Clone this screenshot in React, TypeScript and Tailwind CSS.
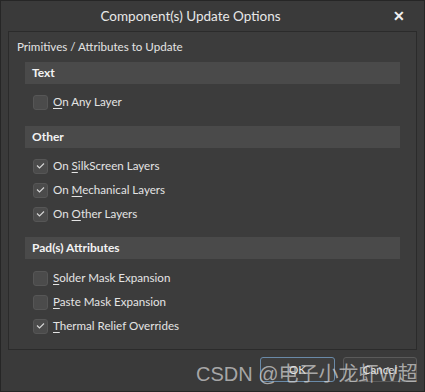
import React from "react";

const Check = ({ checked }: { checked: boolean }) => (
  <div className="w-[15px] h-[15px] rounded-[3px] bg-[#4b4b4b] border border-[#565656] flex items-center justify-center shrink-0">
    {checked && (
      <svg width="11" height="11" viewBox="0 0 11 11">
        <polyline points="2,4.5 4.5,7 9,2.5" fill="none" stroke="#d6d6d6" strokeWidth="1.1" />
      </svg>
    )}
  </div>
);

const Row = ({ checked, pre, u, rest }: { checked: boolean; pre: string; u: string; rest: string }) => (
  <div className="h-[24px] flex items-center pl-[8px] gap-[5px]">
    <Check checked={checked} />
    <span className="text-[11.6px] text-[#e4e4e4]">
      {pre}
      <span className="underline underline-offset-2">{u}</span>
      {rest}
    </span>
  </div>
);

const Header = ({ title }: { title: string }) => (
  <div className="h-[22px] bg-[#4a4a4a] flex items-center pl-[7px] text-[12px] font-bold text-[#f2f2f2]">{title}</div>
);

export default function App() {
  return (
    <div
      className="w-[425px] h-[392px] bg-[#3a3a3a] border border-[#262626] flex flex-col relative overflow-hidden"
      style={{ fontFamily: 'Lato, "Noto Sans", sans-serif' }}
    >
      <div className="h-[30px] relative flex items-center justify-center shrink-0">
        <span className="text-[13.5px] text-[#e8e8e8] -ml-[44px]">Component(s) Update Options</span>
        <span className="absolute right-[19px] top-[4px] text-[14px] font-bold text-[#f0f0f0]">✕</span>
      </div>
      <div className="mx-[7px] h-[319px] border border-[#2b2b2b] bg-[#3c3c3c] flex flex-col pl-[8px] pr-[16px]">
        <div className="h-[30px] flex items-center text-[11.6px] text-[#e4e4e4]">Primitives / Attributes to Update</div>
        <div className="pl-[8px] flex flex-col">
          <Header title="Text" />
          <div className="h-[6px]" />
          <Row checked={false} pre="" u="O" rest="n Any Layer" />
          <div className="h-[12px]" />
          <Header title="Other" />
          <div className="h-[6px]" />
          <Row checked={true} pre="On " u="S" rest="ilkScreen Layers" />
          <Row checked={true} pre="On " u="M" rest="echanical Layers" />
          <Row checked={true} pre="On " u="O" rest="ther Layers" />
          <div className="h-[11px]" />
          <Header title="Pad(s) Attributes" />
          <div className="h-[7px]" />
          <Row checked={false} pre="" u="S" rest="older Mask Expansion" />
          <Row checked={false} pre="" u="P" rest="aste Mask Expansion" />
          <Row checked={true} pre="" u="T" rest="hermal Relief Overrides" />
        </div>
      </div>
      <div className="flex justify-end gap-[8px] pr-[7px] pt-[7px]">
        <div className="w-[75px] h-[25px] rounded-[3px] border border-[#6a8aa8] bg-[#3e3e3e] flex items-center justify-center text-[11.6px] text-[#e4e4e4]">OK</div>
        <div className="w-[74px] h-[25px] rounded-[3px] border border-[#5a5a5a] bg-[#3e3e3e] flex items-center justify-center text-[11.6px] text-[#e4e4e4]">Cancel</div>
      </div>
      <div
        className="absolute left-[195px] top-[358px] text-[20px] text-[#d8d8d8]/70 whitespace-nowrap pointer-events-none"
        style={{ fontFamily: '"Liberation Sans", "Noto Sans CJK SC", sans-serif' }}
      >
        CSDN @电子小龙虾W超
      </div>
    </div>
  );
}
